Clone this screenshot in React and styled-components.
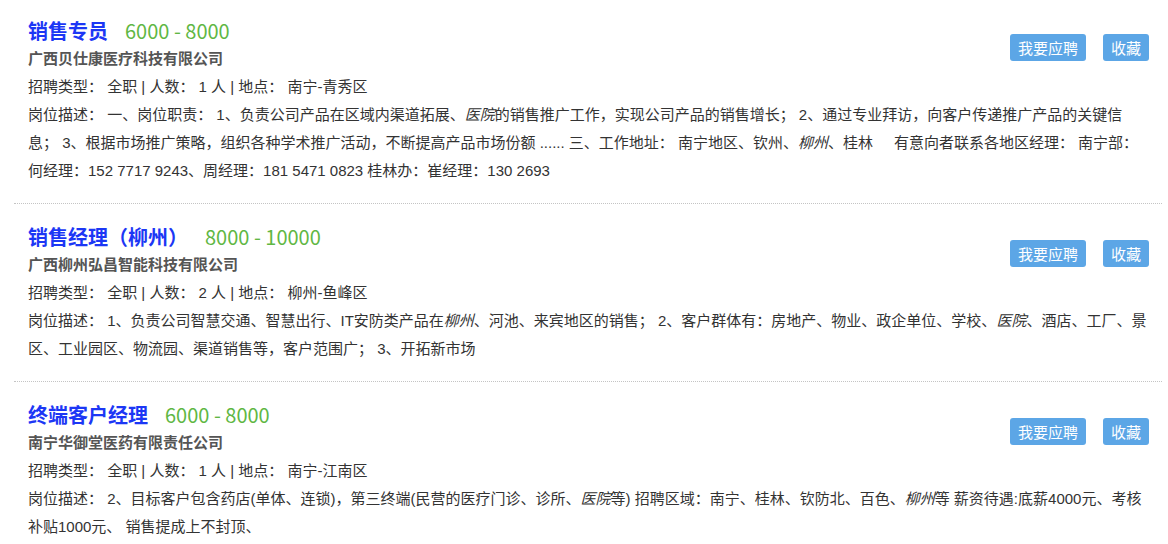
import React from "react";
import styled, { createGlobalStyle } from "styled-components";

const GlobalStyle = createGlobalStyle`
  body {
    margin: 0;
    background: #fff;
    font-family: "Liberation Sans", "Noto Sans CJK SC", sans-serif;
    color: #333;
  }
`;

// each description is split into the lines shown in the listing
const jobs = [
  {
    title: "销售专员",
    salary: "6000 - 8000",
    company: "广西贝仕康医疗科技有限公司",
    type: "全职",
    count: 1,
    place: "南宁-青秀区",
    desc: [
      ["岗位描述： 一、岗位职责： 1、负责公司产品在区域内渠道拓展、", { em: "医院" }, "的销售推广工作，实现公司产品的销售增长； 2、通过专业拜访，向客户传递推广产品的关键信"],
      ["息； 3、根据市场推广策略，组织各种学术推广活动，不断提高产品市场份额 ...... 三、工作地址： 南宁地区、钦州、", { em: "柳州" }, "、桂林\u00a0\u00a0\u00a0\u00a0 有意向者联系各地区经理： 南宁部："],
      ["何经理：152 7717 9243、周经理：181 5471 0823 桂林办：崔经理：130 2693"],
    ],
  },
  {
    title: "销售经理（柳州）",
    salary: "8000 - 10000",
    company: "广西柳州弘昌智能科技有限公司",
    type: "全职",
    count: 2,
    place: "柳州-鱼峰区",
    desc: [
      ["岗位描述： 1、负责公司智慧交通、智慧出行、IT安防类产品在", { em: "柳州" }, "、河池、来宾地区的销售； 2、客户群体有：房地产、物业、政企单位、学校、", { em: "医院" }, "、酒店、工厂、景"],
      ["区、工业园区、物流园、渠道销售等，客户范围广； 3、开拓新市场"],
    ],
  },
  {
    title: "终端客户经理",
    salary: "6000 - 8000",
    company: "南宁华御堂医药有限责任公司",
    type: "全职",
    count: 1,
    place: "南宁-江南区",
    desc: [
      ["岗位描述： 2、目标客户包含药店(单体、连锁)，第三终端(民营的医疗门诊、诊所、", { em: "医院" }, "等) 招聘区域：南宁、桂林、钦防北、百色、", { em: "柳州" }, "等 薪资待遇:底薪4000元、考核"],
      ["补贴1000元、 销售提成上不封顶、"],
    ],
  },
];

function App() {
  return (
    <>
      <GlobalStyle />
      <List>
        {jobs.map((job) => (
          <Item key={job.title}>
            <Head>
              <TitleRow>
                <Title>{job.title}</Title>
                <Salary>{job.salary}</Salary>
              </TitleRow>
              <Company>{job.company}</Company>
              <Info>
                招聘类型： {job.type} | 人数： {job.count} 人 | 地点： {job.place}
              </Info>
            </Head>
            <Actions>
              <Button>我要应聘</Button>
              <Button>收藏</Button>
            </Actions>
            <Desc>
              {job.desc.map((line, n) => (
                <DescLine key={n}>
                  {line.map((part, i) =>
                    typeof part === "string" ? part : <Key key={i}>{part.em}</Key>
                  )}
                </DescLine>
              ))}
            </Desc>
          </Item>
        ))}
      </List>
    </>
  );
}

const List = styled.div`
  margin: -2px 6px 0 14px;
`;

const Item = styled.div`
  display: grid;
  grid-template-columns: 1fr auto;
  padding: 17px 0 18px 14px;
  border-bottom: 1px dotted #c4c4c4;
`;

const Head = styled.div`
  display: flex;
  flex-direction: column;
`;

const TitleRow = styled.div`
  display: flex;
  align-items: center;
  height: 30px;
`;

const Title = styled.span`
  font-family: "Noto Sans CJK SC", sans-serif;
  font-size: 20px;
  font-weight: bold;
  color: #1c37f5;
`;

const Salary = styled.span`
  margin-left: 17px;
  font-family: "Noto Sans CJK SC", sans-serif;
  font-size: 20px;
  color: #5fb744;
`;

const Company = styled.div`
  font-size: 15px;
  font-weight: bold;
  color: #555;
  line-height: 28px;
`;

const Info = styled.div`
  font-size: 15px;
  line-height: 28px;
  color: #333;
`;

const Actions = styled.div`
  display: flex;
  gap: 17px;
  margin: 19px 13px 0 0;
  align-self: start;
`;

const Button = styled.button`
  height: 27px;
  padding: 0 8px;
  border: none;
  border-radius: 3px;
  background-color: #5ca6e6;
  color: #fff;
  font-family: "Noto Sans CJK SC", sans-serif;
  font-size: 15px;
  line-height: 27px;
  cursor: pointer;
`;

const Desc = styled.div`
  grid-column: 1 / -1;
  font-size: 15px;
  line-height: 28px;
  color: #333;
`;

const DescLine = styled.div`
  white-space: nowrap;
`;

const Key = styled.em`
  font-style: italic;
`;

export default App;
